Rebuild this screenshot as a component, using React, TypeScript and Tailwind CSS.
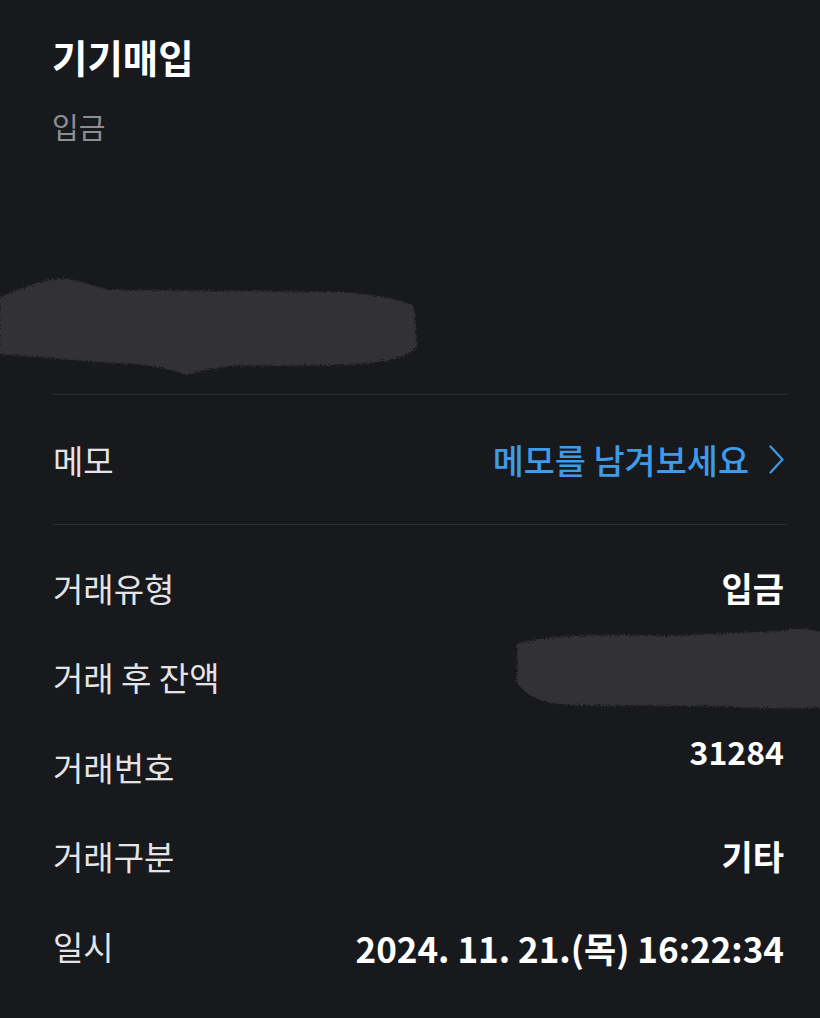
import React from "react";

const FONT = { fontFamily: '"Noto Sans CJK KR", "Noto Sans", sans-serif' };

function Row({
  label,
  children,
  valueClass = "",
}: {
  label: string;
  children: React.ReactNode;
  valueClass?: string;
}) {
  return (
    <div className="flex h-[89.5px] items-center justify-between">
      <span className="text-[33px] leading-[42px] text-[#e4e4e6]">{label}</span>
      <div className={valueClass}>{children}</div>
    </div>
  );
}

export default function App() {
  return (
    <div className="min-h-[1018px] w-full overflow-hidden bg-[#18191d]" style={FONT}>
      {/* Header */}
      <div className="pl-[52px] pt-[31px]">
        <h1 className="text-[38.5px] font-bold leading-[50px] text-white">기기매입</h1>
        <p className="mt-[25px] text-[29px] leading-[40px] text-[#8e8e92]">입금</p>
      </div>

      {/* Redacted amount */}
      <div className="mt-[127px]">
        <svg width="420" height="105" viewBox="0 0 420 105" className="block">
          <defs>
            <filter id="rough1" x="-5%" y="-10%" width="110%" height="120%">
              <feTurbulence type="fractalNoise" baseFrequency="0.9" numOctaves="2" result="n" />
              <feDisplacementMap in="SourceGraphic" in2="n" scale="7" />
              <feGaussianBlur stdDeviation="0.6" />
            </filter>
          </defs>
          <path
            d="M0,24 C20,16 40,8 55,6 C70,4 90,12 110,17 L340,19 C370,21 400,26 414,33 L417,72 C410,86 380,90 340,92 L230,93 C210,95 195,100 185,102 C175,96 150,91 100,89 L0,81 Z"
            fill="#333335"
            filter="url(#rough1)"
          />
        </svg>
      </div>

      {/* Content */}
      <div className="ml-[53px] mr-[33px] mt-[16px]">
        <div className="h-px bg-[#2c2d32]" />
        <div className="flex h-[129px] items-center justify-between">
          <span className="text-[33px] leading-[42px] text-[#e4e4e6]">메모</span>
          <div className="flex items-center gap-[20px] pr-[3px]">
            <span className="text-[33.8px] font-medium leading-[42px] text-[#3d9be9]">메모를 남겨보세요</span>
            <svg width="15" height="29" viewBox="0 0 15 29" fill="none">
              <path d="M1.5 1.5 L13.5 14.5 L1.5 27.5" stroke="#3d9be9" strokeWidth="2.2" strokeLinecap="round" strokeLinejoin="round" />
            </svg>
          </div>
        </div>
        <div className="h-px bg-[#2c2d32]" />

        <div className="pt-[18px]">
          <Row label="거래유형" valueClass="pr-[3px]">
            <span className="text-[34px] font-bold leading-[42px] text-white">입금</span>
          </Row>
          <Row label="거래 후 잔액" valueClass="-mr-[36px] mb-[20px]">
            <svg width="310" height="90" viewBox="0 0 310 90" className="block">
              <defs>
                <filter id="rough2" x="-5%" y="-10%" width="110%" height="120%">
                  <feTurbulence type="fractalNoise" baseFrequency="0.9" numOctaves="2" result="n" />
                  <feDisplacementMap in="SourceGraphic" in2="n" scale="7" />
                  <feGaussianBlur stdDeviation="0.6" />
                </filter>
              </defs>
              <path
                d="M4,22 C30,14 80,12 150,14 L270,9 C285,5 300,7 312,12 L312,84 C290,88 250,86 200,84 L60,83 C30,82 12,74 4,60 Z"
                fill="#323234"
                filter="url(#rough2)"
              />
            </svg>
          </Row>
          <Row label="거래번호" valueClass="pr-[3px] pb-[32px]">
            <span className="text-[32px] font-bold leading-[42px] text-white">31284</span>
          </Row>
          <Row label="거래구분" valueClass="pr-[3px]">
            <span className="text-[34px] font-bold leading-[42px] text-white">기타</span>
          </Row>
          <Row label="일시" valueClass="pr-[3px] pt-[4px]">
            <span className="text-[35px] font-bold leading-[42px] text-white">2024. 11. 21.(목) 16:22:34</span>
          </Row>
        </div>
      </div>
    </div>
  );
}
